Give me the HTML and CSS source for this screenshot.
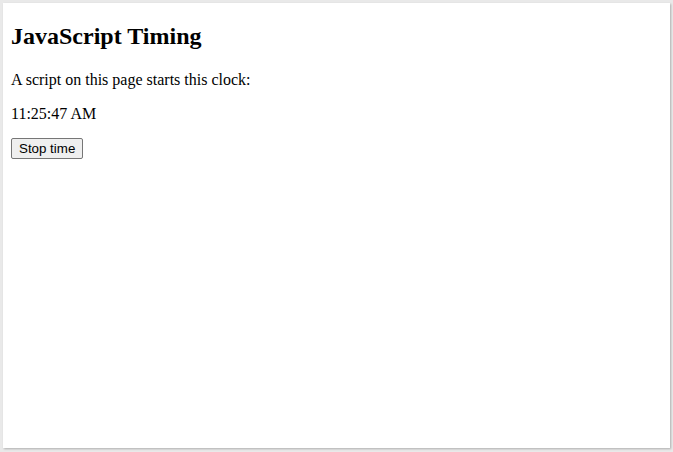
FILE: index.html
```html
<!DOCTYPE html>
<html>
<head>
<meta charset="utf-8">
<title>JavaScript Timing</title>
<link rel="stylesheet" href="styles.css">
</head>
<body>
<div class="frame">
  <div class="page">
    <h2 class="title">JavaScript Timing</h2>
    <p class="text">A script on this page starts this clock:</p>
    <p class="text clock">11:25:47 AM</p>
    <button class="btn" type="button">Stop time</button>
  </div>
</div>
</body>
</html>
```
FILE: styles.css
```css
html, body {
  margin: 0;
  padding: 0;
  background: #e9e9e9;
  height: 100%;
}
body {
  padding: 3px 3px 4px 3px;
  box-sizing: border-box;
}
.frame {
  background: #fff;
  height: 445px;
  width: 667px;
  box-shadow: 1px 1px 2px rgba(0,0,0,0.25);
}
.page {
  padding: 1px 8px 8px 8px;
  font-family: "Liberation Serif", "Times New Roman", serif;
  font-size: 16px;
  color: #000;
}
.title {
  font-size: 24px;
  font-weight: bold;
  margin: 19px 0 21px 0;
}
.text {
  margin: 16px 0;
}
.clock {
  margin-bottom: 15px;
}
.btn {
  font-family: "Liberation Sans", Arial, sans-serif;
  font-size: 13.33px;
  padding: 2px 7px;
  border: 1px solid #767676;
  border-radius: 2px;
  background: #efefef;
  color: #000;
}
```
